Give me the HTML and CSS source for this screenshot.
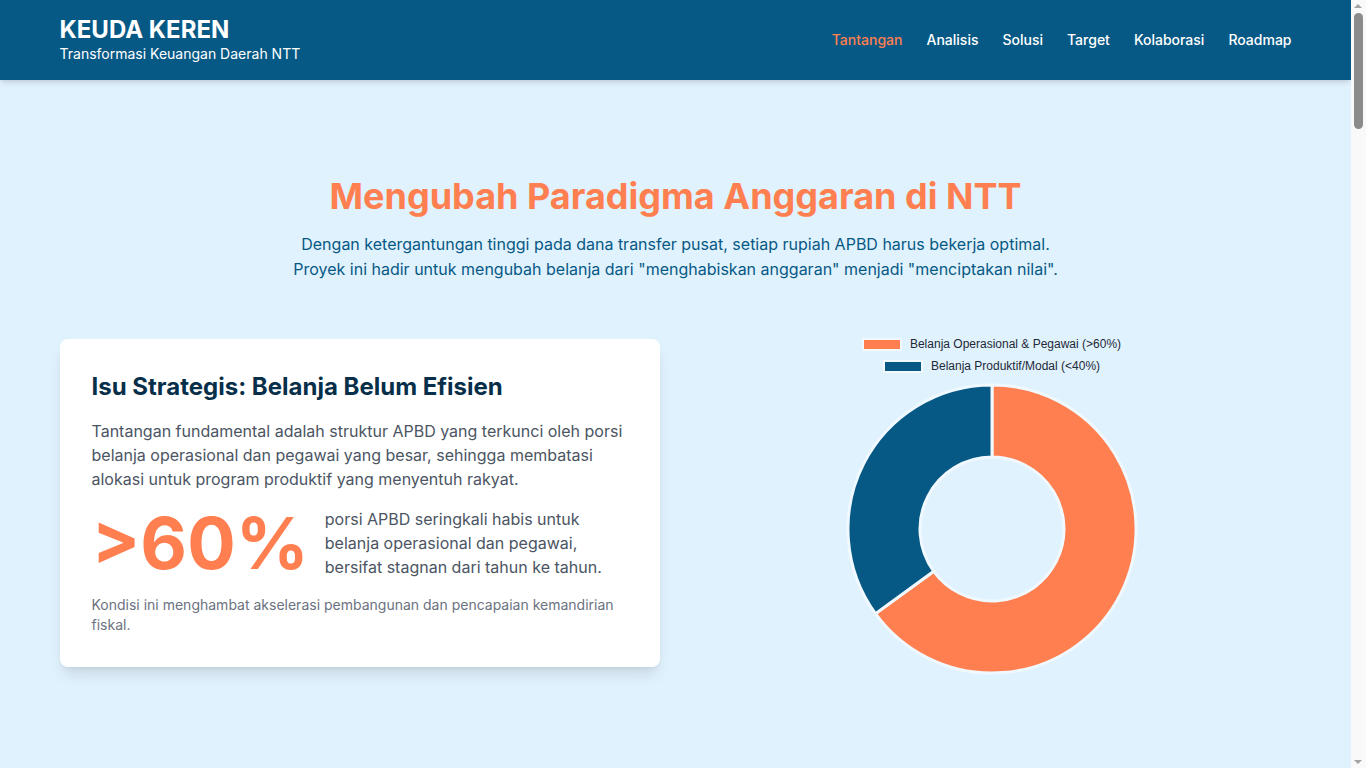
FILE: index.html
```html
<!DOCTYPE html>
<html lang="id">
<head>
<meta charset="utf-8">
<title>KEUDA KEREN</title>
<link rel="stylesheet" href="styles.css">
</head>
<body>
<header class="site-header">
  <div class="container header-inner">
    <div class="brand">
      <div class="brand-title">KEUDA KEREN</div>
      <div class="brand-sub">Transformasi Keuangan Daerah NTT</div>
    </div>
    <nav class="nav">
      <a class="nav-link active" href="#tantangan">Tantangan</a>
      <a class="nav-link" href="#analisis">Analisis</a>
      <a class="nav-link" href="#solusi">Solusi</a>
      <a class="nav-link" href="#target">Target</a>
      <a class="nav-link" href="#kolaborasi">Kolaborasi</a>
      <a class="nav-link" href="#roadmap">Roadmap</a>
    </nav>
  </div>
</header>

<main>
  <section id="tantangan" class="hero">
    <div class="container">
      <h1 class="hero-title">Mengubah Paradigma Anggaran di NTT</h1>
      <p class="hero-lead">Dengan ketergantungan tinggi pada dana transfer pusat, setiap rupiah APBD harus bekerja optimal.<br>Proyek ini hadir untuk mengubah belanja dari "menghabiskan anggaran" menjadi "menciptakan nilai".</p>

      <div class="hero-grid">
        <div class="card">
          <h2 class="card-title">Isu Strategis: Belanja Belum Efisien</h2>
          <p class="card-text">Tantangan fundamental adalah struktur APBD yang terkunci oleh porsi belanja operasional dan pegawai yang besar, sehingga membatasi alokasi untuk program produktif yang menyentuh rakyat.</p>
          <div class="stat">
            <div class="stat-number">&gt;60%</div>
            <p class="stat-text">porsi APBD seringkali habis untuk belanja operasional dan pegawai, bersifat stagnan dari tahun ke tahun.</p>
          </div>
          <p class="card-note">Kondisi ini menghambat akselerasi pembangunan dan pencapaian kemandirian fiskal.</p>
        </div>

        <div class="chart">
          <ul class="legend">
            <li class="legend-item"><span class="legend-box box-orange"></span>Belanja Operasional &amp; Pegawai (&gt;60%)</li>
            <li class="legend-item"><span class="legend-box box-blue"></span>Belanja Produktif/Modal (&lt;40%)</li>
          </ul>
          <svg class="donut" width="300" height="300" viewBox="0 0 300 300">
            <path class="seg-orange" d="M150,5 A145,145 0 1 1 32.7,235.2 L91.35,192.6 A72.5,72.5 0 1 0 150,77.5 Z"/>
            <path class="seg-blue" d="M32.7,235.2 A145,145 0 0 1 150,5 L150,77.5 A72.5,72.5 0 0 0 91.35,192.6 Z"/>
          </svg>
        </div>
      </div>
    </div>
  </section>
  <section id="analisis" class="spacer"></section>
</main>

<div class="scrollbar" aria-hidden="true">
  <span class="sb-arrow sb-up"></span>
  <span class="sb-thumb"></span>
  <span class="sb-arrow sb-down"></span>
</div>
</body>
</html>
```

FILE: styles.css
```css
* { box-sizing: border-box; }

html, body {
  margin: 0;
  padding: 0;
}

body {
  font-family: Inter, "Noto Sans", "Liberation Sans", sans-serif;
  background: #e0f2fe;
  color: #374151;
  padding-right: 15px;
}

.container {
  max-width: 1280px;
  margin: 0 auto;
  padding: 0 24px;
}

.site-header {
  position: sticky;
  top: 0;
  z-index: 10;
  background: #075985;
  box-shadow: 0 4px 6px -1px rgba(0,0,0,0.1), 0 2px 4px -2px rgba(0,0,0,0.1);
}

.header-inner {
  display: flex;
  align-items: center;
  justify-content: space-between;
  padding-top: 16px;
  padding-bottom: 16px;
}

.brand-title {
  color: #ffffff;
  font-size: 24px;
  font-weight: 700;
  line-height: 28px;
}

.brand-sub {
  color: #ffffff;
  font-size: 14px;
  font-weight: 400;
  line-height: 20px;
}

.nav {
  display: flex;
  gap: 24px;
}

.nav-link {
  color: #ffffff;
  text-decoration: none;
  font-size: 14px;
  font-weight: 500;
  line-height: 20px;
}

.nav-link.active {
  color: #ff7f50;
}

.hero {
  padding-top: 96px;
  padding-bottom: 96px;
}

.hero-title {
  margin: 0 0 16px;
  text-align: center;
  color: #ff7f50;
  font-size: 36px;
  line-height: 40px;
  font-weight: 700;
}

.hero-lead {
  margin: 0 auto 46px;
  text-align: center;
  color: #075985;
  font-size: 16px;
  line-height: 25px;
}

.hero-grid {
  display: grid;
  grid-template-columns: 1fr 1fr;
  gap: 32px;
  align-items: center;
}

.card {
  background: #ffffff;
  border-radius: 8px;
  padding: 32px;
  box-shadow: 0 10px 15px -3px rgba(0,0,0,0.1), 0 4px 6px -4px rgba(0,0,0,0.1);
}

.card-title {
  margin: 0 0 16px;
  color: #082f49;
  font-size: 24px;
  line-height: 32px;
  font-weight: 700;
}

.card-text {
  margin: 0 0 16px;
  color: #4b5563;
  font-size: 16px;
  line-height: 24px;
}

.stat {
  display: flex;
  align-items: center;
  gap: 16px;
}

.stat-number {
  color: #ff7f50;
  font-size: 72px;
  line-height: 72px;
  font-weight: 700;
  flex-shrink: 0;
}

.stat-text {
  margin: 0;
  color: #4b5563;
  font-size: 16px;
  line-height: 24px;
}

.card-note {
  margin: 16px 0 0;
  color: #6b7280;
  font-size: 14px;
  line-height: 20px;
}

.chart {
  height: 350px;
  display: flex;
  flex-direction: column;
  align-items: center;
}

.legend {
  list-style: none;
  margin: 0;
  padding: 5px 0 0;
  display: flex;
  flex-direction: column;
  align-items: center;
}

.legend-item {
  display: flex;
  align-items: center;
  height: 22px;
  font-family: "Liberation Sans", Arial, sans-serif;
  font-size: 12px;
  color: #1f2937;
}

.legend-box {
  width: 40px;
  height: 13px;
  border: 2px solid #f0f9ff;
  margin-right: 8px;
}

.box-orange { background: #ff7f50; }
.box-blue { background: #075985; }

.donut {
  margin-top: 3px;
  display: block;
}

.seg-orange { fill: #ff7f50; stroke: #f0f9ff; stroke-width: 3; }
.seg-blue { fill: #075985; stroke: #f0f9ff; stroke-width: 3; }

.spacer {
  height: 3800px;
}

/* decorative classic scrollbar gutter */
.scrollbar {
  position: fixed;
  top: 0;
  right: 0;
  bottom: 0;
  width: 15px;
  background: #f9f9f9;
  z-index: 20;
}

.sb-thumb {
  position: absolute;
  left: 3px;
  top: 13px;
  width: 9px;
  height: 116px;
  border-radius: 5px;
  background: #8b8b8b;
}

.sb-arrow {
  position: absolute;
  left: 3px;
  width: 0;
  height: 0;
  border-left: 4.5px solid transparent;
  border-right: 4.5px solid transparent;
}

.sb-up {
  top: 4px;
  border-bottom: 4px solid #a3a3a3;
}

.sb-down {
  bottom: 4px;
  border-top: 4px solid #a3a3a3;
}
```
